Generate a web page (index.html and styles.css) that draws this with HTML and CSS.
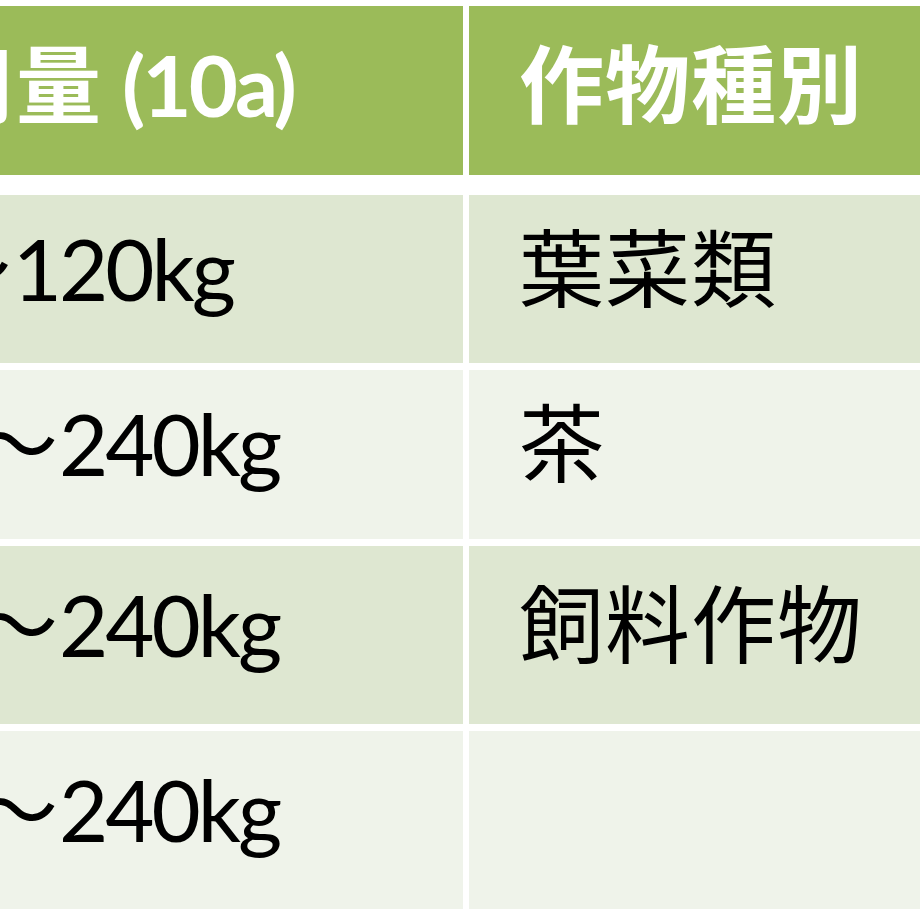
FILE: index.html
```html
<!DOCTYPE html>
<html lang="ja">
<head>
<meta charset="utf-8">
<link rel="stylesheet" href="styles.css">
</head>
<body>
<div class="table">
  <div class="row head">
    <div class="cell">施用量<span class="num paren">(10a)</span></div>
    <div class="cell">作物種別</div>
  </div>
  <div class="body">
    <div class="row band1 r1">
      <div class="cell"><span class="num">60</span>～<span class="num">120kg</span></div>
      <div class="cell">葉菜類</div>
    </div>
    <div class="row band2 r2">
      <div class="cell"><span class="num">120</span>～<span class="num">240kg</span></div>
      <div class="cell">茶</div>
    </div>
    <div class="row band1 r3">
      <div class="cell"><span class="num">120</span>～<span class="num">240kg</span></div>
      <div class="cell">飼料作物</div>
    </div>
    <div class="row band2 r4">
      <div class="cell"><span class="num">120</span>～<span class="num">240kg</span></div>
      <div class="cell"></div>
    </div>
  </div>
</div>
</body>
</html>
```
FILE: styles.css
```css
html, body {
  margin: 0;
  padding: 0;
  background: #ffffff;
  overflow: hidden;
}
body {
  width: 920px;
  height: 920px;
  font-family: "Lato", "Noto Sans CJK JP", sans-serif;
}
.table {
  margin: 6px 0 0 -216px;
  width: 1200px;
}
.row {
  display: grid;
  grid-template-columns: 679px 500px;
  column-gap: 6px;
}
.cell {
  display: flex;
  align-items: center;
  padding-left: 50px;
  padding-bottom: 22px;
  font-size: 85px;
  line-height: 1;
  letter-spacing: 1px;
  white-space: nowrap;
  color: #000000;
}
.head {
  height: 169px;
}
.head .cell {
  background: #9bbb59;
  color: #ffffff;
  font-weight: 700;
  padding-bottom: 12px;
}
.head .cell:first-child {
  padding-left: 60px;
}
.paren {
  margin-left: 20px;
}
.body {
  margin-top: 20px;
  display: flex;
  flex-direction: column;
  gap: 7px;
}
.band1 .cell { background: #dee7d1; }
.band2 .cell { background: #eff3ea; }
.r1 { height: 168px; }
.r2 { height: 169px; }
.r3 { height: 178px; }
.r4 { height: 178px; }
.num {
  letter-spacing: -3px;
}
```
